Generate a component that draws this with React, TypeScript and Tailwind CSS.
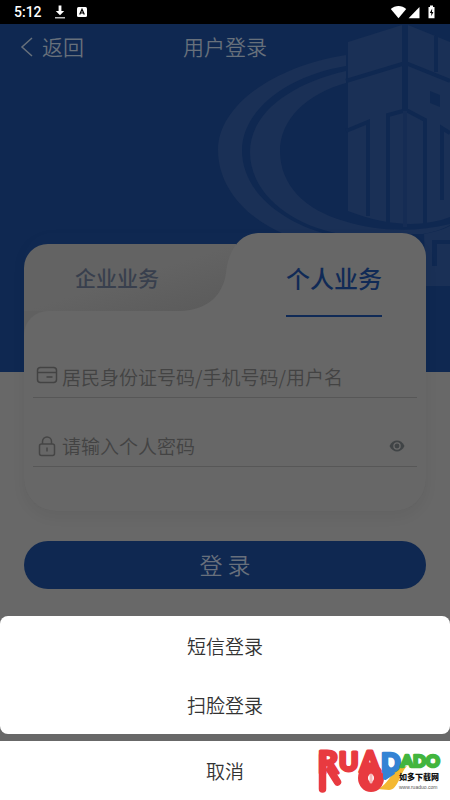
import React from "react";

function StatusBar() {
  return (
    <div className="relative flex h-6 items-center justify-between bg-black pr-3.5 pl-[14px] text-white">
      <div className="flex items-center">
        <span className="w-[40px] font-[Roboto,sans-serif] text-[14px] leading-6 font-medium">5:12</span>
        <svg className="h-3.5 w-3" viewBox="0 0 12 14" aria-hidden="true">
          <path d="M4.6 0.5h2.8v5.5h2.8L6 10.2 1.8 6h2.8z" fill="#fff" />
          <path d="M1 12h10v1.5H1z" fill="#bbb" />
        </svg>
        <svg className="ml-[11px] h-3 w-2.5" viewBox="0 0 10 12" aria-hidden="true">
          <rect x="0" y="1" width="10" height="10" rx="1.5" fill="#fff" />
          <path d="M2.7 8.6 5 3.2l2.3 5.4M3.6 7h2.8" fill="none" stroke="#000" strokeWidth="1.2" />
        </svg>
      </div>
      <svg className="h-4 w-[46px]" viewBox="0 0 46 16" aria-hidden="true" fill="#fff">
        <path d="M8.5 14.2.8 5C5 .9 12 .9 16.2 5z" />
        <path d="M29.5 3v11.3H18.6z" />
        <path d="M40 1.5h3V3h1.5v11.3h-6V3H40z" />
        <path d="M42.2 4.5 39.8 9h1.5v3.2L43.4 8H42z" fill="#000" />
      </svg>
    </div>
  );
}

function Emblem() {
  return (
    <svg className="absolute top-0 right-0 h-[264px] w-[240px]" viewBox="210 24 240 264" fill="#1a3056" aria-hidden="true">
      <path d="M346 55C271 67 218 107 218 150c0 37 28 68 66 84h42c-49-14-84-45-84-84 0-39 44-74 104-84z" />
      <path d="M346 71C289 84 250 114 250 152c0 40 38 72 90 82h83c12-2 20-5 27-9v-1c-36 9-75 7-106-3-39-11-64-36-64-70 0-31 26-57 66-68z" />
      <path d="M348 42 402 25h6l42 17v175c-25 10-62 10-102-6z" />
      <g fill="none" stroke="#0f2851" strokeWidth="4">
        <path d="M405 24v87" strokeWidth="6" />
        <path d="M346 81 402 64h6l42 17M436 36v36M346 131l22-9v94M388 224V115l15-4h5l17 9v106M450 133l-8-5v72" />
        <path d="M405 111v116" stroke="#152c54" />
      </g>
      <path d="M430 91l10 4v12l-10-4z" fill="#0f2851" />
      <path d="M424 234c10-2 18-4 26-8v60h-24z" />
      <path d="M450 240h-18v26h5v-22h13z" fill="#0f2851" />
    </svg>
  );
}

function CardIcon() {
  return (
    <svg className="h-[18px] w-[22px] -translate-y-0.5" viewBox="0 0 22 18" fill="none" stroke="#434343" strokeWidth="1.5" aria-hidden="true">
      <rect x="1.5" y="1.5" width="19" height="15" rx="3" />
      <path d="M1.5 6.5h19M10.5 11h6" />
    </svg>
  );
}

function LockIcon() {
  return (
    <svg className="h-[22px] w-[22px]" viewBox="0 0 22 22" fill="none" stroke="#454545" strokeWidth="1.5" aria-hidden="true">
      <rect x="3.5" y="9" width="15" height="11.5" rx="2" />
      <path d="M6.5 9V6.5a4.5 4.5 0 0 1 9 0V9M11 12.5v4" />
    </svg>
  );
}

function Logo() {
  return (
    <svg className="absolute right-2 bottom-0 h-[59px] w-[128px]" viewBox="0 0 128 59" role="img" aria-label="RUADADO 如多下载网">
      <g fontFamily="Lato, 'Open Sans', sans-serif" fontWeight="900" strokeLinejoin="round">
        <path d="M63 48c7-2 12-10 19-20l11-3c-7 7-9 24-18 24z" fill="#f4b832" />
        <path d="M8.500 14v34M16 29l7.500 12" stroke="#e83a40" strokeWidth="7.500" strokeLinecap="round" />
        <ellipse cx="57" cy="37" rx="8" ry="9" fill="none" stroke="#e83a40" strokeWidth="10" />
        <g fill="#e83a40" stroke="#e83a40" strokeWidth="3">
          <text x="4" y="32" fontSize="31">R</text>
          <text x="25" y="30" fontSize="26">U</text>
          <text x="46" y="31" fontSize="28">A</text>
        </g>
        <path d="M57 34v7" stroke="#f5b9bb" strokeWidth="3" strokeLinecap="round" />
        <path d="M71 20v17l9-6" stroke="#3483d4" strokeWidth="4" fill="#3483d4" />
        <text x="67" y="31" fontSize="26" fill="#3483d4" stroke="#3483d4" strokeWidth="2.500">D</text>
        <g fill="#42b53e" stroke="#42b53e" strokeWidth="2.500">
          <text x="87" y="26" fontSize="17">A</text>
          <text x="99" y="26" fontSize="17">D</text>
          <text x="112" y="26" fontSize="17">O</text>
        </g>
      </g>
      <text x="85" y="39" fontFamily="'Noto Sans CJK SC', sans-serif" fontWeight="900" fontSize="8" fill="#111">如多下载网</text>
      <text x="85" y="48" fontFamily="'Liberation Sans', sans-serif" fontSize="5" fill="#555">www.ruaduo.com</text>
    </svg>
  );
}

const inputClass =
  "h-7 min-w-0 flex-1 bg-transparent text-[19px] leading-7 font-[350] text-[#404040] outline-none placeholder:text-[#434343] placeholder:opacity-100";

function LoginCard() {
  return (
    <form className="rounded-t-[28px] rounded-b-[32px] shadow-[0_6px_14px_rgba(0,0,0,0.05)]">
      <div role="tablist" className="flex h-[78px] items-end">
        <button
          type="button"
          role="tab"
          aria-selected="false"
          className="h-[67px] w-[212px] shrink-0 rounded-tl-[24px] bg-linear-to-br from-[#636363] from-50% to-[#5a5a5a] pr-[26px] text-[21px] font-medium text-[#383f4d]"
        >
          企业业务
        </button>
        <svg className="relative -ml-[56px] h-[78px] w-[78px] shrink-0" viewBox="0 0 78 78" aria-hidden="true">
          <path d="M0 78C28 77 43 62 46 40 48 17 60 0 79 0v78z" fill="#676767" />
        </svg>
        <button
          type="button"
          role="tab"
          aria-selected="true"
          className="relative -mb-1.5 flex h-[84px] flex-1 flex-col items-center rounded-tr-[24px] bg-[#676767] pr-4 text-[24px] leading-9 font-medium text-[#102a56]"
        >
          <span className="flex h-full border-b-2 border-[#102a56] pt-[27px]">个人业务</span>
        </button>
      </div>
      <div className="rounded-b-[32px] bg-[#606060]">
        <div className="rounded-tl-[24px] rounded-b-[32px] bg-[#676767] px-[9px] pt-[18px] pb-11">
          <label className="flex h-[69px] items-center gap-1 border-b border-[#575757] pt-7 pl-[3px]">
            <CardIcon />
            <input type="text" aria-label="用户名" placeholder="居民身份证号码/手机号码/用户名" className={inputClass} />
          </label>
          <div className="flex h-[69px] items-center gap-1 border-b border-[#575757] pt-7 pr-3 pl-[3px]">
            <LockIcon />
            <input type="password" aria-label="密码" placeholder="请输入个人密码" className={inputClass} />
            <button type="button" aria-label="显示密码">
              <svg className="h-3 w-4" viewBox="0 0 16 12" aria-hidden="true">
                <path d="M.5 6C4-1.3 12-1.3 15.5 6 12 13.3 4 13.3.5 6z" fill="#404446" />
                <circle cx="8" cy="6" r="3.1" fill="#404446" stroke="#6a6a6a" strokeWidth="1.3" />
              </svg>
            </button>
          </div>
        </div>
      </div>
    </form>
  );
}

const optionClass = "block h-[59px] w-full pt-0.5 text-[19px] font-[350] text-[#333333]";

export default function App() {
  return (
    <div className="relative flex min-h-screen flex-col bg-[#686868] font-['Noto_Sans_CJK_SC',sans-serif]">
      <StatusBar />
      <div className="relative flex-1">
        <div className="absolute inset-x-0 top-0 h-[348px] overflow-hidden bg-[#0f2851]">
          <Emblem />
        </div>
        <header className="relative grid h-[46px] grid-cols-3 items-center text-[21px] font-[350] text-[#67707b]">
          <button type="button" className="flex items-center gap-2 pl-5">
            <svg className="h-5 w-3.5" viewBox="0 0 14 20" fill="none" stroke="currentColor" strokeWidth="1.5" aria-hidden="true">
              <path d="M12 1 2 10l10 9" />
            </svg>
            返回
          </button>
          <h1 className="text-center">用户登录</h1>
        </header>
        <main className="relative px-6 pt-[163px]">
          <LoginCard />
          <button
            type="button"
            className="mt-[30px] h-12 w-full rounded-full bg-[#0f2851] pb-0.5 text-[23px] font-[350] text-[#68707c]"
          >
            登 录
          </button>
        </main>
      </div>
      <div role="dialog" aria-label="登录方式" className="relative mt-[27px]">
        <div className="rounded-lg bg-white">
          <button type="button" className={optionClass}>短信登录</button>
          <button type="button" className={optionClass}>扫脸登录</button>
        </div>
        <div className="relative mt-[7px] bg-white">
          <button type="button" className={optionClass}>取消</button>
          <Logo />
        </div>
      </div>
    </div>
  );
}
